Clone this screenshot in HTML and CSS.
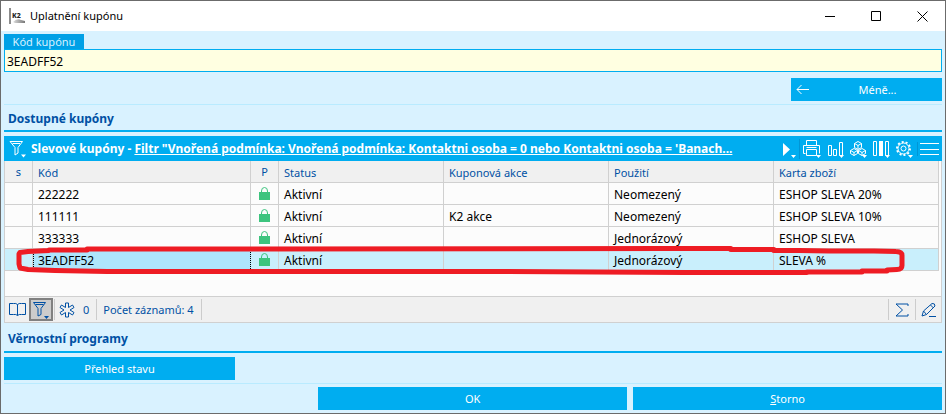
FILE: index.html
```html
<!DOCTYPE html>
<html lang="cs">
<head>
  <meta charset="UTF-8">
  <meta name="viewport" content="width=device-width, initial-scale=1.0">
  <title>Uplatnění kupónu</title>
  <link rel="stylesheet" href="styles.css">
</head>
<body>
  <div class="window">
    <header class="titlebar">
      <svg class="logo" width="16" height="16" viewBox="0 0 16 16">
        <defs>
          <linearGradient id="hill" x1="0" x2="1"><stop offset="0" stop-color="#ddd"/><stop offset="1" stop-color="#777"/></linearGradient>
        </defs>
        <path d="M0 0h2v16H0z" fill="#8c8c8c"/>
        <path d="M4 14q4-4 8-2l4 1v2H6z" fill="url(#hill)"/>
        <text x="3" y="10" class="logo-text">K2</text>
      </svg>
      <h1>Uplatnění kupónu</h1>
      <button class="win-btn" aria-label="Minimalizovat"><svg width="11" height="11"><path d="M0 5.5h10"/></svg></button>
      <button class="win-btn" aria-label="Maximalizovat"><svg width="11" height="11"><path d="M.5 .5h9v9h-9z"/></svg></button>
      <button class="win-btn" aria-label="Zavřít"><svg width="11" height="11"><path d="M.5 .5l10 10M10.5 .5l-10 10"/></svg></button>
    </header>

    <main>
      <div class="field">
        <label for="code">Kód kupónu</label>
        <input type="text" id="code" value="3EADFF52">
      </div>

      <div class="less-row">
        <button class="btn less">
          <svg width="14" height="11" viewBox="0 0 14 11"><path d="M13 5.500H1M5.500 1L1 5.500 5.500 10"/></svg>
          <span>Méně...</span>
        </button>
      </div>

      <h2>Dostupné kupóny</h2>

      <section class="panel">
        <div class="toolbar">
          <button class="tool filter" aria-label="Filtr">
            <svg width="18" height="18" viewBox="0 0 18 18"><path d="M1 1.500h12.500L9 7.500v5.500L6 15V7.500zM3.500 3.500h7.500"/><path class="solid" d="M12 14.500h5l-2.500 3z"/></svg>
          </button>
          <p>Slevové kupóny - <a href="#">Filtr "Vnořená podmínka: Vnořená podmínka: Kontaktni osoba = 0 nebo Kontaktni osoba = 'Banach...</a></p>
          <button class="tool play" aria-label="Spustit">
            <svg width="18" height="20" viewBox="0 0 18 20"><path class="solid" d="M4 4l7 6.500L4 17zM12 16h5l-2.500 3z"/></svg>
          </button>
          <button class="tool print" aria-label="Tisk">
            <svg width="20" height="20" viewBox="0 0 20 20"><path d="M4.500 6V1.500h10V6M3.500 14.500h-2V6.500h16v8M4.500 10.500h10v6h-10zM4.500 8.500h10"/><path class="solid" d="M14 16h5l-2.500 3z"/></svg>
          </button>
          <button class="tool" aria-label="Graf">
            <svg width="18" height="20" viewBox="0 0 18 20"><path d="M1.500 6.500h3v10h-3zM6.500 10.500h3v6h-3zM12.500 3.500h3v13h-3z"/><path class="solid" d="M12 16h5l-2.500 3z"/></svg>
          </button>
          <button class="tool" aria-label="Vazby">
            <svg width="20" height="20" viewBox="0 0 20 20"><path d="M9 2.500l3.500 2v4L9 10.500 5.500 8.500v-4zM5 9.500l3.500 2v3L5 16.500l-3.500-2v-3zM13 9.500l3.500 2v3L13 16.500l-3.500-2v-3zM5.500 4.500L9 6.500l3.500-2M9 6.500v4M1.500 11.500L5 13.500l3.500-2M5 13.500v3M9.500 11.500l3.500 2 3.500-2M13 13.500v3"/><path class="solid" d="M13 16h5l-2.500 3z"/></svg>
          </button>
          <button class="tool" aria-label="Sloupce">
            <svg width="20" height="20" viewBox="0 0 20 20"><path d="M1.500 2.500h3v14h-3zM13.500 2.500h3v14h-3z"/><path class="solid" d="M7 2h4v15H7zM13 16h5l-2.500 3z"/></svg>
          </button>
          <button class="tool gear" aria-label="Nastavení">
            <svg width="20" height="20" viewBox="0 0 20 20"><circle cx="8.500" cy="9.500" r="5.500"/><circle cx="8.500" cy="9.500" r="2.500"/><circle class="teeth" cx="8.500" cy="9.500" r="6.500"/><path class="solid" d="M13 16h5l-2.500 3z"/></svg>
          </button>
          <button class="tool menu" aria-label="Nabídka">
            <svg width="19" height="14" viewBox="0 0 19 14"><path d="M0 1.500h19M0 7.500h19M0 12.500h19"/></svg>
          </button>
        </div>

        <div class="grid">
          <table>
            <colgroup>
              <col class="col-s"><col class="col-code"><col class="col-p"><col><col><col><col>
            </colgroup>
            <thead>
              <tr><th class="mid">s</th><th>Kód</th><th class="mid">P</th><th>Status</th><th>Kuponová akce</th><th>Použití</th><th>Karta zboží</th></tr>
            </thead>
            <tbody>
              <tr><td></td><td>222222</td><td class="mid"><svg class="lock" width="11" height="13"><use href="#lock"/></svg></td><td>Aktivní</td><td></td><td>Neomezený</td><td>ESHOP SLEVA 20%</td></tr>
              <tr><td></td><td>111111</td><td class="mid"><svg class="lock" width="11" height="13"><use href="#lock"/></svg></td><td>Aktivní</td><td>K2 akce</td><td>Neomezený</td><td>ESHOP SLEVA 10%</td></tr>
              <tr><td></td><td>333333</td><td class="mid"><svg class="lock" width="11" height="13"><use href="#lock"/></svg></td><td>Aktivní</td><td></td><td>Jednorázový</td><td>ESHOP SLEVA</td></tr>
              <tr class="selected"><td></td><td class="current">3EADFF52</td><td class="mid"><svg class="lock" width="11" height="13"><use href="#lock"/></svg></td><td>Aktivní</td><td></td><td>Jednorázový</td><td>SLEVA %</td></tr>
            </tbody>
          </table>
          <!-- hand-drawn marker around the selected row -->
          <svg class="marker" viewBox="0 0 890 30" preserveAspectRatio="none">
            <path d="M5 7.500L13 6.500 34 5.500l0-.5h38v-1H120L650 3.500h65l0 1h43l0 1h25l30 .5h45l22 .5q6 0 6 4v10q0 4-5 4l-10 .5v1h-25v1h-55v.5H670L480 26.500H92L40 25.500l-27-1-8-1.500-1-4V9z"/>
          </svg>
        </div>

        <footer class="status">
          <button class="stat" aria-label="Kniha">
            <svg width="17" height="15" viewBox="0 0 17 15"><path d="M8.500 2.500Q7 1 4.500 1.500h-4v11h4q2.500-.5 4 1 1.500-1.500 4-1h4v-11h-4Q10 1 8.500 2.500v11"/></svg>
          </button>
          <button class="stat pressed" aria-label="Filtr">
            <svg width="18" height="18" viewBox="0 0 18 18"><path d="M1.500 1.500h12L9 7.500v6L6 15V7.500zM3.500 3.500h8"/><path class="solid" d="M12 15h5l-2.500 3z"/></svg>
          </button>
          <span class="sep"></span>
          <span class="marks">
            <svg width="16" height="16" viewBox="0 0 16 16"><path d="M6.500 1h3v4.500l4-2.500 1.500 2.500L11 8l4 2.500-1.500 2.500-4-2.500V15h-3v-4.500l-4 2.500L1 10.500 5 8 1 5.500 2.500 3l4 2.500z"/></svg>
            0
          </span>
          <span class="sep"></span>
          <span class="count">Počet záznamů: 4</span>
          <span class="sep"></span>
          <span class="fill"></span>
          <span class="sep"></span>
          <button class="stat edge" aria-label="Součet">
            <svg width="14" height="14" viewBox="0 0 14 14"><path d="M13 3V1H1l6.500 6L1 13h12v-2"/></svg>
          </button>
          <span class="sep"></span>
          <button class="stat edge" aria-label="Upravit">
            <svg width="16" height="16" viewBox="0 0 16 16"><path d="M1 14l1.500-5L11 1.500q3-.5 3 2.500L5.500 12.500zM2.500 9l3 3.500M9.500 3l3 3M8 14.500h7"/></svg>
          </button>
        </footer>
      </section>

      <h2 class="loyalty">Věrnostní programy</h2>
      <div class="overview">
        <button class="btn">Přehled stavu</button>
      </div>

      <div class="actions">
        <button class="btn">OK</button>
        <button class="btn"><u>S</u>torno</button>
      </div>
    </main>
  </div>

  <svg class="defs" width="0" height="0">
    <symbol id="lock" viewBox="0 0 11 13">
      <path d="M2.500 7V4q0-3.500 3-3.500t3 3.500v3" fill="none" stroke="#3dc47e"/>
      <path d="M0 5h11v8H0z" fill="#3dc47e"/>
    </symbol>
  </svg>
</body>
</html>
```
FILE: styles.css
```css
* {
  box-sizing: border-box;
}

body {
  margin: 0;
  font-family: "Noto Sans", "Open Sans", sans-serif;
  font-size: 11px;
  line-height: 16px;
  color: #000;
}

button,
input {
  font: inherit;
  margin: 0;
  border: none;
  border-radius: 0;
}

button {
  padding: 0;
  color: inherit;
  background: none;
}

svg {
  display: block;
  fill: none;
  stroke: currentColor;
}

.solid {
  fill: currentColor;
  stroke: none;
}

.defs {
  position: absolute;
}

.window {
  min-height: 100vh;
  border: 1px solid #6b6b6b;
  background-color: #d9f2ff;
}

.titlebar {
  display: flex;
  align-items: center;
  height: 30px;
  padding-left: 8px;
  background-color: #fff;
}

.titlebar h1 {
  flex: 1;
  margin: 0 0 0 5px;
  font-size: 11px;
  font-weight: normal;
}

.logo {
  stroke: none;
}

.logo-text {
  font-size: 7px;
  font-weight: 800;
  fill: #222;
}

.win-btn {
  display: flex;
  justify-content: center;
  align-items: center;
  width: 46px;
  height: 30px;
}

main {
  padding: 3px;
}

.field label {
  display: block;
  width: 80px;
  height: 15px;
  line-height: 15px;
  text-align: center;
  color: #d9f2ff;
  background-color: #00a0e6;
}

.field input {
  display: block;
  width: 100%;
  height: 23px;
  padding: 2px 2px 0;
  border: 1px solid #00adf0;
  font-size: 12px;
  background-color: #ffffe1;
}

.btn {
  height: 23px;
  color: #fff;
  background-color: #00adf0;
}

.less-row {
  display: flex;
  justify-content: flex-end;
  padding: 6px 0 3px;
  border-bottom: 1px solid #b9ebff;
}

.less {
  display: flex;
  align-items: center;
  width: 151px;
  padding: 0 5px;
}

.less span {
  flex: 1;
  padding-left: 8px;
}

h2 {
  height: 27px;
  margin: 0 0 4px;
  padding-left: 4px;
  border-bottom: 2px solid #00adf0;
  font-size: 12px;
  line-height: 28px;
  color: #0050a4;
}

.toolbar {
  display: flex;
  align-items: center;
  height: 25px;
  padding: 0 2px 0 5px;
  color: #fff;
  background-color: #00adf0;
}

.toolbar p {
  flex: 1;
  margin: 0 0 0 4px;
  padding-top: 1px;
  font-size: 12px;
  font-weight: bold;
  white-space: nowrap;
  overflow: hidden;
}

.toolbar a {
  color: inherit;
}

.tool {
  display: flex;
  justify-content: center;
  width: 23px;
}

.filter {
  width: 18px;
}

.play {
  width: 22px;
}

.print {
  width: 25px;
  border-left: 1px solid #0096d6;
}

.gear {
  width: 24px;
}

.teeth {
  stroke-width: 2;
  stroke-dasharray: 2 2;
}

.menu {
  border-left: 1px solid #0096d6;
}

.grid {
  position: relative;
  padding: 0 2px 25px 0;
  border: 1px solid #d0d0d0;
  border-width: 0 1px;
  background-color: #fcfcfc;
}

table {
  width: 100%;
  table-layout: fixed;
  border-collapse: separate;
  border-spacing: 0;
}

.col-s,
.col-p {
  width: 28px;
}

.col-code {
  width: 218px;
}

th,
td {
  height: 22px;
  padding: 2px 5px 0;
  border-right: 1px solid #d0d0d0;
  border-bottom: 1px solid #d0d0d0;
  text-align: left;
  white-space: nowrap;
}

td {
  font-size: 12px;
}

th {
  font-weight: normal;
  color: #0050a4;
  background-color: #f0f0f0;
}

.mid {
  padding-top: 0;
  text-align: center;
}

.lock {
  margin: 0 auto;
  stroke: none;
}

.selected td {
  background-color: #c9effc;
}

.selected .current {
  padding-left: 4px;
  border-right: 1px dotted #000;
  border-left: 1px dotted #000;
  background-color: #aee6fc;
}

.marker {
  position: absolute;
  left: 10px;
  top: 84px;
  width: calc(100% - 45px);
  height: 30px;
  stroke: #ee1c24;
  stroke-width: 5;
  stroke-linejoin: round;
}

.status {
  display: flex;
  align-items: center;
  height: 27px;
  border: 1px solid #d0d0d0;
  color: #0050a4;
  background-color: #f0f0f0;
}

.stat {
  display: flex;
  justify-content: center;
  align-items: center;
  width: 24px;
  height: 23px;
}

.pressed {
  border: 2px solid #808080;
  background-color: #cccccc;
}

.edge {
  width: 25px;
}

.sep {
  width: 1px;
  height: 21px;
  margin-left: 1px;
  background-color: #cccccc;
}

.marks {
  display: flex;
  gap: 8px;
  padding: 0 6px 0 4px;
}

.count {
  padding: 0 6px;
}

.fill {
  flex: 1;
}

.loyalty {
  height: 30px;
  line-height: 32px;
}

.overview {
  padding-bottom: 3px;
  border-bottom: 1px solid #b9ebff;
}

.overview .btn {
  width: 231px;
}

.actions {
  display: grid;
  grid-template-columns: 1fr 1fr;
  gap: 6px;
  margin-left: 33.5%;
  padding-top: 3px;
}
```
